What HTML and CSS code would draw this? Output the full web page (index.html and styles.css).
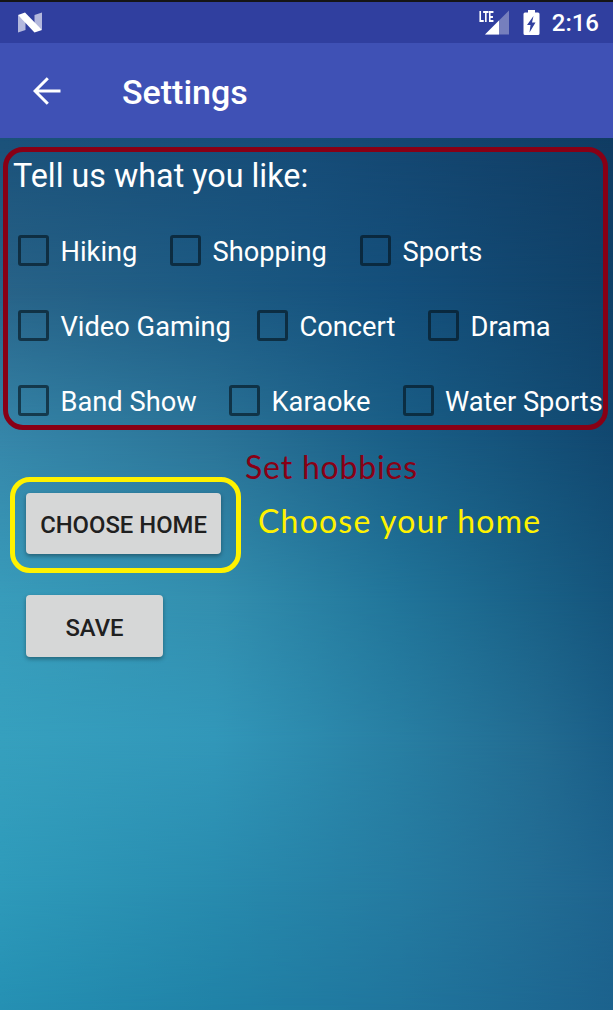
FILE: index.html
```html
<!DOCTYPE html>
<html lang="en">
<head>
<meta charset="utf-8">
<title>Settings</title>
<link rel="stylesheet" href="styles.css">
</head>
<body>
<div class="screen">
  <div class="backdrop">
    <div class="tone tone-1"></div>
    <div class="tone tone-2"></div>
    <div class="tone tone-3"></div>
    <div class="tone tone-4"></div>
    <div class="tone tone-5"></div>
    <div class="tone tone-6"></div>
    <div class="tone tone-7"></div>
  </div>
  <div class="status-bar">
    <svg class="n-logo" width="26" height="22" viewBox="0 0 26 22">
      <path d="M1 3L8.500 9V18L1 20.500Z M17.500 3L25 .5V18L17.500 13Z" fill="#b3b8dd"/>
      <path d="M1 3L8 .5L25 18L17.500 20.500Z" fill="#fff"/>
    </svg>
    <div class="status-icons">
      <div class="signal">
        <svg width="32" height="26" viewBox="0 0 32 26">
          <path d="M7 24.500L31 .5V24.500Z" fill="#767fbd"/>
          <path d="M7 24.500L21 10.500V24.500Z" fill="#fff"/>
        </svg>
        <span class="lte">LTE</span>
      </div>
      <svg class="battery" width="17" height="26" viewBox="0 0 17 26">
        <path d="M5 0H12V2.500H15Q16.500 2.500 16.500 4V23.500Q16.500 25 15 25H2Q.5 25 .5 23.500V4Q.5 2.500 2 2.500H5Z" fill="#fff"/>
        <path d="M10.500 6L4 15H7.500L6.500 22.500L12.500 12.500H9Z" fill="#303f9f"/>
      </svg>
      <span class="clock">2:16</span>
    </div>
  </div>
  <header class="app-bar">
    <svg class="back" width="28" height="28" viewBox="0 0 28 28">
      <path d="M27.500 14H2M14.800 1.200L2 14L14.800 26.800" fill="none" stroke="#fff" stroke-width="3"/>
    </svg>
    <h1 class="title">Settings</h1>
  </header>
  <main class="content">
    <section class="hobbies">
      <h2 class="prompt">Tell us what you like:</h2>
      <div class="row row-a">
        <label class="option"><span class="box"></span><span class="name">Hiking</span></label>
        <label class="option"><span class="box"></span><span class="name">Shopping</span></label>
        <label class="option"><span class="box"></span><span class="name">Sports</span></label>
      </div>
      <div class="row row-b">
        <label class="option"><span class="box"></span><span class="name">Video Gaming</span></label>
        <label class="option"><span class="box"></span><span class="name">Concert</span></label>
        <label class="option"><span class="box"></span><span class="name">Drama</span></label>
      </div>
      <div class="row row-c">
        <label class="option"><span class="box"></span><span class="name">Band Show</span></label>
        <label class="option"><span class="box"></span><span class="name">Karaoke</span></label>
        <label class="option"><span class="box"></span><span class="name">Water Sports</span></label>
      </div>
    </section>
    <section class="home">
      <div class="home-frame"><button class="btn btn-home">CHOOSE HOME</button></div>
      <div class="notes">
        <p class="note note-red">Set hobbies</p>
        <p class="note note-yellow">Choose your home</p>
      </div>
    </section>
    <button class="btn btn-save">SAVE</button>
  </main>
</div>
</body>
</html>
```
FILE: styles.css
```css
* { box-sizing: border-box; }
body { margin: 0; font-family: Roboto, sans-serif; }
h1, h2, p { margin: 0; font-weight: 400; }

.screen {
  position: relative;
  width: 613px;
  height: 1010px;
  overflow: hidden;
  border-top: 2px solid #151515;
}

/* Bands of horizontal colour, each fading in over the one above */
.backdrop { position: absolute; inset: -2px 0 0; z-index: -1; }
.tone { position: absolute; inset: 0; }
.tone-1 { background: linear-gradient(90deg, #1b527a, #164c78 50%, #103c63); }
.tone-2 { background: linear-gradient(90deg, #286388, #1c5a83 35%, #144f7b 65%, #104168); -webkit-mask-image: linear-gradient(transparent 140px, #000 290px); mask-image: linear-gradient(transparent 140px, #000 290px); }
.tone-3 { background: linear-gradient(90deg, #3687aa, #2b7498 35%, #1a5f87 65%, #114870); -webkit-mask-image: linear-gradient(transparent 290px, #000 440px); mask-image: linear-gradient(transparent 290px, #000 440px); }
.tone-4 { background: linear-gradient(90deg, #389cbb, #338faf 35%, #21759a 65%, #15557c); -webkit-mask-image: linear-gradient(transparent 440px, #000 600px); mask-image: linear-gradient(transparent 440px, #000 600px); }
.tone-5 { background: linear-gradient(90deg, #36a0be, #3297b9 35%, #287fa3 65%, #226b91 88%, #1a5e87); -webkit-mask-image: linear-gradient(transparent 600px, #000 740px); mask-image: linear-gradient(transparent 600px, #000 740px); }
.tone-6 { background: linear-gradient(90deg, #2e9aba, #288bae 35%, #257ba1 65%, #226c94 88%, #1e648e); -webkit-mask-image: linear-gradient(transparent 740px, #000 890px); mask-image: linear-gradient(transparent 740px, #000 890px); }
.tone-7 { background: linear-gradient(90deg, #2590b3, #2082a7 35%, #20759d 65%, #1c628d); -webkit-mask-image: linear-gradient(transparent 890px, #000 1010px); mask-image: linear-gradient(transparent 890px, #000 1010px); }

.status-bar {
  display: flex;
  justify-content: space-between;
  height: 41px;
  padding: 8px 14px 0 17px;
  background: #303f9f;
}
.n-logo { margin-top: 2px; }
.status-icons { display: flex; }
.signal { position: relative; width: 32px; height: 26px; margin-right: 13px; }
.lte {
  position: absolute;
  left: 1px;
  top: 0;
  font: 900 14px/14px Roboto, sans-serif;
  transform: scaleX(.64);
  transform-origin: left;
  color: #fff;
}
.battery { margin-right: 12px; }
.clock { font-size: 24px; line-height: 27px; font-weight: 500; color: #fff; }

.app-bar {
  display: flex;
  align-items: center;
  height: 95px;
  padding-left: 33px;
  background: #3f51b5;
  color: #fff;
}
.title { margin: 3px 0 0 61px; font-size: 34px; font-weight: 500; line-height: 40px; }

.content { padding: 9px 3px 0; }
.hobbies {
  height: 283px;
  width: 605px;
  border: 5px solid #880015;
  border-radius: 20px;
  color: #fff;
  padding-left: 5px;
}
.prompt { font-size: 32.300px; line-height: 40px; margin-top: 4px; white-space: nowrap; }
.row { display: grid; align-items: center; height: 75px; padding-left: 5px; white-space: nowrap; }
.row-a { grid-template-columns: 152px 190px auto; margin-top: 17px; }
.row-b { grid-template-columns: 239px 171px auto; }
.row-c { grid-template-columns: 211px 173.500px auto; }
.option { display: flex; align-items: center; gap: 11.500px; font-size: 27.250px; line-height: 32px; }
.name { padding-top: 2px; }
.box { width: 31px; height: 31px; flex: none; border: 3px solid rgba(5, 20, 30, .64); border-radius: 3px; }

.home { display: flex; align-items: flex-start; padding-left: 7px; }
.home-frame {
  width: 231px;
  height: 96px;
  margin-top: 47px;
  padding: 11px;
  border: 5px solid #fff200;
  border-radius: 20px;
}
.btn {
  display: block;
  height: 61px;
  padding: 3px 0 0;
  border: 0;
  border-radius: 4px;
  background: #d6d7d7;
  color: #1f2020;
  font: 500 23.840px/58px Roboto, sans-serif;
  box-shadow: 0 2px 4px rgba(0, 0, 0, .35);
}
.btn-home { width: 195px; }
.btn-save { width: 137px; height: 62px; padding-top: 3px; margin: 22px 0 0 23px; }
.notes { padding: 17px 0 0 4px; }
.note { font-family: Lato, sans-serif; font-size: 32px; line-height: 40px; white-space: nowrap; }
.note-red { color: #880015; letter-spacing: .8px; }
.note-yellow { color: #fff200; margin: 14px 0 0 13px; letter-spacing: 1.200px; }
```
